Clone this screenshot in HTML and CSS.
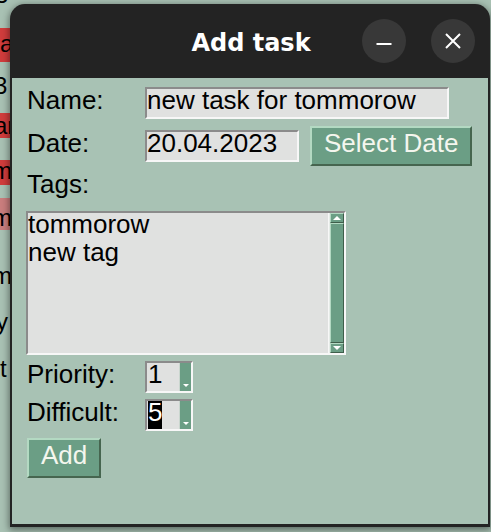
FILE: index.html
```html
<!DOCTYPE html>
<html>
<head>
<meta charset="utf-8">
<link rel="stylesheet" href="styles.css">
</head>
<body>
<div class="backdrop">
  <div class="brow r0"><span class="g g0">3</span></div>
  <div class="brow r1 red"><span class="g g1">a</span></div>
  <div class="brow r2"><span class="g g2">3</span></div>
  <div class="brow r3 red"><span class="g g3">ar</span></div>
  <div class="brow r4"></div>
  <div class="brow r5 red"><span class="g g5">m</span></div>
  <div class="brow r6"></div>
  <div class="brow r7 pink"><span class="g g7">m</span></div>
  <div class="brow r8"></div>
  <div class="brow r9"><span class="g g9">m</span></div>
  <div class="brow r10"><span class="g g10">y</span></div>
  <div class="brow r11"><span class="g g11">t</span></div>
</div>

<div class="window">
  <div class="titlebar">
    <div class="title">Add task</div>
    <div class="controls">
      <div class="ctl"><svg width="16" height="16" viewBox="0 0 16 16"><rect x="0.5" y="10" width="15" height="2" fill="#ffffff"/></svg></div>
      <div class="ctl"><svg width="16" height="16" viewBox="0 0 16 16"><path d="M1 1 L15 15 M15 1 L1 15" stroke="#ffffff" stroke-width="2"/></svg></div>
    </div>
  </div>
  <div class="content">
    <div class="row row-name">
      <div class="label">Name:</div>
      <div class="entry entry-name">new task for tommorow</div>
    </div>
    <div class="row row-date">
      <div class="label">Date:</div>
      <div class="entry entry-date">20.04.2023</div>
      <div class="btn btn-date">Select Date</div>
    </div>
    <div class="row row-tags">
      <div class="label">Tags:</div>
    </div>
    <div class="textframe">
      <div class="textarea"><div class="textlines">tommorow<br>new tag</div></div>
      <div class="scrollbar">
        <div class="sb-btn sb-up"><span class="tri-up"></span></div>
        <div class="sb-slider"></div>
        <div class="sb-btn sb-down"><span class="tri-down"></span></div>
      </div>
    </div>
    <div class="row row-prio">
      <div class="label">Priority:</div>
      <div class="spin">
        <div class="spin-text">1</div>
        <div class="spin-btn"><span class="tri-small"></span></div>
      </div>
    </div>
    <div class="row row-diff">
      <div class="label">Difficult:</div>
      <div class="spin">
        <div class="spin-text"><span class="sel">5</span></div>
        <div class="spin-btn"><span class="tri-small"></span></div>
      </div>
    </div>
    <div class="row row-add">
      <div class="btn btn-add">Add</div>
    </div>
  </div>
</div>
</body>
</html>
```
FILE: styles.css
```css
html, body {
  margin: 0;
  padding: 0;
}
body {
  width: 491px;
  height: 532px;
  overflow: hidden;
  position: relative;
  background: #a8c1b3;
  font-family: "Liberation Sans", Arial, sans-serif;
  color: #000;
}

/* window behind */
.backdrop {
  display: flex;
  flex-direction: column;
  width: 40px;
}
.brow {
  font-size: 24px;
  line-height: 24px;
  overflow: hidden;
  white-space: nowrap;
}
.red { background: #d03c3c; }
.pink { background: #c97d7d; }
.g { display: block; margin-left: -5px; }
.r0 { height: 28px; }
.g0 { margin-top: -17px; }
.r1 { height: 34px; }
.g1 { margin-top: 4px; margin-left: 0; }
.r2 { height: 51px; }
.g2 { margin-top: 12px; margin-left: -6px; }
.r3 { height: 25px; }
.g3 { margin-top: 1px; margin-left: -6px; }
.r4 { height: 22px; }
.r5 { height: 25px; }
.g5 { margin-top: -1px; margin-left: -8px; }
.r6 { height: 13px; }
.r7 { height: 32px; }
.g7 { margin-top: 8px; margin-left: -8px; }
.r8 { height: 32px; }
.r9 { height: 40px; }
.g9 { margin-top: 2px; margin-left: -8px; }
.r10 { height: 45px; }
.g10 { margin-top: 8px; margin-left: -4px; }
.r11 { height: 40px; }
.g11 { margin-top: 10px; margin-left: 0; }

/* dialog window */
.window {
  position: absolute;
  left: 10px;
  top: 4px;
  width: 480px;
  height: 523px;
  background: #232323;
  border-radius: 15px 15px 0 0;
  box-shadow: 0 2px 7px 1px rgba(0, 0, 0, 0.45);
  display: flex;
  flex-direction: column;
}
.titlebar {
  flex: none;
  height: 74px;
  display: grid;
  grid-template-columns: 1fr auto 1fr;
  align-items: center;
}
.title {
  grid-column: 2;
  color: #ffffff;
  font-family: "DejaVu Sans", sans-serif;
  font-weight: bold;
  font-size: 24px;
  padding-top: 4px;
  padding-left: 2px;
}
.controls {
  grid-column: 3;
  justify-self: end;
  display: flex;
  gap: 25px;
  margin-right: 15px;
}
.ctl {
  width: 44px;
  height: 44px;
  border-radius: 50%;
  background: #383838;
  display: flex;
  align-items: center;
  justify-content: center;
}
.ctl svg { display: block; }

.content {
  flex: 1;
  margin: 0 2px 3px 2px;
  background: #a8c2b4;
  padding: 9px 0 0 14px;
  font-size: 26px;
}

.row {
  display: flex;
  align-items: baseline;
}
.label {
  width: 119px;
  flex: none;
  box-sizing: border-box;
  padding-left: 1px;
  line-height: 22px;
}
.entry {
  box-sizing: border-box;
  height: 32px;
  background: #e0e1e0;
  border: 2px solid;
  border-color: #8b8b8b #f7f7f7 #f7f7f7 #8b8b8b;
  line-height: 22px;
  padding: 0 0 6px 0;
  white-space: nowrap;
  overflow: hidden;
}
.entry-name { width: 304px; }
.entry-date { width: 154px; }

.btn {
  background: #6b9e85;
  color: #f4f6ee;
  border: 2px solid;
  border-color: #b3d9c2 #46654f #46654f #b3d9c2;
  line-height: 22px;
  padding: 4px 12px 10px 12px;
  white-space: nowrap;
}
.btn-date { margin-left: 11px; }
.row-date { margin-top: 7px; }
.row-tags { margin-top: 7px; }

.textframe {
  margin-top: 16px;
  width: 320px;
  height: 144px;
  box-sizing: border-box;
  border: 2px solid;
  border-color: #8b8b8b #f7f7f7 #f7f7f7 #8b8b8b;
  display: flex;
}
.textarea {
  flex: 1;
  background: #e0e1e0;
  border-right: 1px solid #f7f7f7;
  overflow: hidden;
}
.textlines {
  line-height: 28px;
  margin-top: -3px;
}
.scrollbar {
  width: 14px;
  flex: none;
  display: flex;
  flex-direction: column;
  background: #6b9e85;
  border-left: 1px solid #e6ece8;
}
.sb-btn {
  flex: none;
  height: 8px;
  display: flex;
  align-items: center;
  justify-content: center;
  border: 1px solid;
  border-color: #b3d9c2 #3f5e4b #3f5e4b #b3d9c2;
}
.sb-slider {
  flex: 1;
  border: 1px solid;
  border-color: #b3d9c2 #3f5e4b #3f5e4b #b3d9c2;
}
.tri-up {
  width: 0; height: 0;
  border-left: 4px solid transparent;
  border-right: 4px solid transparent;
  border-bottom: 4px solid #ffffff;
}
.tri-down {
  width: 0; height: 0;
  border-left: 4px solid transparent;
  border-right: 4px solid transparent;
  border-top: 4px solid #ffffff;
}

.row-prio { margin-top: 6px; }
.row-diff { margin-top: 6px; }
.spin {
  box-sizing: border-box;
  width: 48px;
  height: 32px;
  border: 2px solid;
  border-color: #8b8b8b #f7f7f7 #f7f7f7 #8b8b8b;
  display: flex;
  background: #e0e1e0;
}
.spin-text {
  flex: 1;
  line-height: 22px;
  padding: 0 0 6px 1px;
  display: flex;
  align-items: baseline;
}
.sel {
  background: #000;
  color: #fff;
  display: inline-block;
  line-height: 22px;
  padding-bottom: 6px;
}
.spin-btn {
  width: 12px;
  flex: none;
  background: #6b9e85;
  border-left: 1px solid #c9d6ce;
  display: flex;
  align-items: flex-end;
  justify-content: center;
  padding-bottom: 3px;
  box-sizing: border-box;
}
.tri-small {
  width: 0; height: 0;
  border-left: 3px solid transparent;
  border-right: 3px solid transparent;
  border-top: 3px solid #ffffff;
  margin-bottom: 1px;
}
.row-add { margin-top: 7px; }
.btn-add {
  margin-left: 1px;
  padding: 4px 12px 10px 12px;
}
```
